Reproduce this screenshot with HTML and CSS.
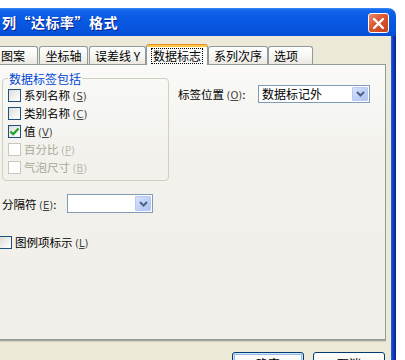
FILE: index.html
```html
<!DOCTYPE html>
<html lang="zh-CN">
<head>
<meta charset="utf-8">
<title>数据系列格式</title>
<link rel="stylesheet" href="styles.css">
</head>
<body>
<div class="window">
  <div class="titlebar">
    <span class="title">列“达标率”格式</span>
    <span class="close"><svg width="13" height="13" viewBox="0 0 13 13"><path d="M2 2 L11 11 M11 2 L2 11" stroke="#fff" stroke-width="2.4" stroke-linecap="round"/></svg></span>
  </div>
  <div class="frame">
    <div class="client">
      <div class="tabs">
        <div class="tab t1">图案</div>
        <div class="tab t2">坐标轴</div>
        <div class="tab t3">误差线 Y</div>
        <div class="tab t4 active"><span class="focus">数据标志</span></div>
        <div class="tab t5">系列次序</div>
        <div class="tab t6">选项</div>
      </div>
      <div class="panel">
        <div class="top">
          <fieldset class="group">
            <legend>数据标签包括</legend>
            <div class="check"><span class="box"></span><span>系列名称 <span class="mn">(<u>S</u>)</span></span></div>
            <div class="check"><span class="box"></span><span>类别名称 <span class="mn">(<u>C</u>)</span></span></div>
            <div class="check"><span class="box checked"><svg width="11" height="11" viewBox="0 0 11 11"><path d="M1.5 5.5 L4.2 8.2 L9.5 2.5" fill="none" stroke="#21A121" stroke-width="2.2"/></svg></span><span>值 <span class="mn">(<u>V</u>)</span></span></div>
            <div class="check disabled"><span class="box"></span><span>百分比 <span class="mn">(<u>P</u>)</span></span></div>
            <div class="check disabled"><span class="box"></span><span>气泡尺寸 <span class="mn">(<u>B</u>)</span></span></div>
          </fieldset>
          <div class="pos">
            <span class="lbl pos-lbl">标签位置 <span class="mn">(<u>O</u>)</span>:</span>
            <div class="combo pos-combo">
              <span class="val">数据标记外</span>
              <span class="drop"><svg width="9" height="6" viewBox="0 0 9 6"><path d="M1 1 L4.5 4.5 L8 1" fill="none" stroke="#4D6185" stroke-width="2"/></svg></span>
            </div>
          </div>
        </div>
        <div class="sep-row">
          <span class="lbl sep-lbl">分隔符 <span class="mn">(<u>E</u>)</span>:</span>
          <div class="combo sep-combo">
            <span class="val"></span>
            <span class="drop"><svg width="9" height="6" viewBox="0 0 9 6"><path d="M1 1 L4.5 4.5 L8 1" fill="none" stroke="#4D6185" stroke-width="2"/></svg></span>
          </div>
        </div>
        <div class="check key-row"><span class="box"></span><span>图例项标示 <span class="mn">(<u>L</u>)</span></span></div>
      </div>
      <div class="buttons">
        <button class="btn default">确定</button>
        <button class="btn">取消</button>
      </div>
    </div>
    <div class="edge"></div>
  </div>
</div>
</body>
</html>
```
FILE: styles.css
```css
* { box-sizing: border-box; }
html, body {
  margin: 0;
  padding: 0;
  width: 405px;
  height: 360px;
  overflow: hidden;
  background: #fff;
  font-family: "Noto Sans CJK SC", "Liberation Sans", sans-serif;
  font-size: 11.5px;
  color: #000;
}
.window {
  width: 412px;
  height: 352px;
  margin: 8px 0 0 -16px;
  display: flex;
  flex-direction: column;
}
.titlebar {
  height: 28px;
  flex: none;
  border-radius: 0 8px 0 0;
  background: linear-gradient(#3D8CF6 0, #1466EC 2px, #0A5CE6 8px, #0756E0 60%, #0650D6 100%);
  display: flex;
  align-items: center;
  justify-content: space-between;
  padding: 0 7px 0 18px;
}
.title {
  color: #fff;
  font-weight: bold;
  font-size: 14px;
  letter-spacing: 0.5px;
  line-height: 16px;
  text-shadow: 1px 1px 0 #0A1E8C;
  white-space: nowrap;
}
.close {
  width: 21px;
  height: 20px;
  margin-top: 2px;
  border: 1px solid #fff;
  border-radius: 3px;
  background: linear-gradient(135deg, #E9896E 0%, #D9562F 45%, #C5401C 100%);
  display: flex;
  align-items: center;
  justify-content: center;
}
.frame {
  flex: 1;
  display: flex;
}
.client {
  flex: 1;
  background: #ECE9D8;
  padding: 8px 5px 0 2px;
}
.edge {
  width: 5px;
  background: linear-gradient(90deg, #2F63D8 0, #0B3EC4 40%, #06238E 100%);
}
.tabs {
  height: 20px;
  display: flex;
  align-items: flex-end;
  padding-left: 2px;
  position: relative;
  z-index: 1;
}
.tab {
  height: 18px;
  border: 1px solid #919B9C;
  border-bottom: none;
  border-radius: 3px 3px 0 0;
  background: linear-gradient(#FFFFFF, #F7F7F4 50%, #EAE8E0);
  display: flex;
  align-items: center;
  justify-content: center;
  font-size: 12px;
  line-height: 14px;
  white-space: nowrap;
}
.t1 { width: 50px; }
.t2 { width: 49px; margin-left: 1px; }
.t3 { width: 57px; margin-left: 1px; }
.t4 { width: 62px; }
.t5 { width: 60px; }
.t6 { width: 45px; justify-content: flex-start; padding-left: 5px; }
.tab.active {
  height: 21px;
  margin-bottom: -1px;
  border-top: none;
  background: linear-gradient(#E68B2C 0, #E68B2C 1px, #FFC83C 1px, #FFC83C 3px, #FCFCFB 3px, #FAFAF8 100%);
  padding-top: 3px;
}
.focus {
  outline: 1px dotted #000;
  outline-offset: 0;
  padding: 0 1px;
  line-height: 14px;
}
.panel {
  height: 276px;
  border: 1px solid #919B9C;
  background: linear-gradient(#FAFAF8, #F2F1EC 35%, #F1EFEA);
  box-shadow: 0 1px 0 #A7A59C, 0 2px 0 #D2CEBE;
  padding: 6px 0 0 15px;
}
.top {
  display: flex;
  align-items: flex-start;
}
.group {
  width: 167px;
  margin: 0;
  padding: 0 0 4px 5px;
  border: 1px solid #D0D0BF;
  border-radius: 4px;
  min-width: 0;
}
.group legend {
  padding: 0 1px;
  font-size: 12px;
  line-height: 15px;
  color: #0046D5;
}
.check {
  display: flex;
  align-items: center;
  height: 18px;
  gap: 3px;
  white-space: nowrap;
}
.box {
  width: 13px;
  height: 13px;
  flex: none;
  border: 1px solid #1C5180;
  background: linear-gradient(135deg, #DCDCD7 0%, #F2F2EF 60%, #FFFFFF 100%);
  display: flex;
  align-items: center;
  justify-content: center;
}
.check.disabled { color: #ACA899; }
.check.disabled .box {
  border-color: #CAC8BB;
  background: #FFFFFF;
}
.mn {
  font-family: "DejaVu Sans", sans-serif;
  font-size: 10px;
  color: #444;
}
.check.disabled .mn { color: #BEBAAC; }
.pos {
  margin: 14px 0 0 9px;
  display: flex;
  align-items: center;
}
.lbl { white-space: nowrap; }
.pos-lbl { width: 80px; }
.combo {
  border: 1px solid #7F9DB9;
  background: #fff;
  display: flex;
  align-items: stretch;
  padding: 1px;
}
.pos-combo { width: 112px; height: 18px; }
.sep-combo { width: 86px; height: 19px; }
.val {
  flex: 1;
  padding-left: 2px;
  line-height: 14px;
  font-size: 12px;
}
.drop {
  width: 16px;
  flex: none;
  border: 1px solid #B7C8F2;
  border-radius: 1px;
  background: linear-gradient(135deg, #D6E2FD 0%, #BCCFF7 60%, #AFC4F1 100%);
  display: flex;
  align-items: center;
  justify-content: center;
}
.sep-row {
  margin-top: 13px;
  display: flex;
  align-items: center;
}
.sep-lbl { width: 65px; }
.key-row {
  margin: 20px 0 0 -3px;
}
.buttons {
  margin-top: 12px;
  display: flex;
  justify-content: flex-end;
  gap: 9px;
  padding-right: 1px;
}
.btn {
  width: 72px;
  height: 23px;
  border: 1px solid #003C74;
  border-radius: 3px;
  background: linear-gradient(#FFFFFF, #F4F4F0 60%, #E3E1D8);
  font-family: "Noto Sans CJK SC", sans-serif;
  font-size: 12px;
  line-height: 14px;
  color: #000;
  padding: 0;
}
.btn.default {
  box-shadow: inset 0 0 0 1px #CEE7FF, inset 0 0 0 2px #98B8EA;
}
```
